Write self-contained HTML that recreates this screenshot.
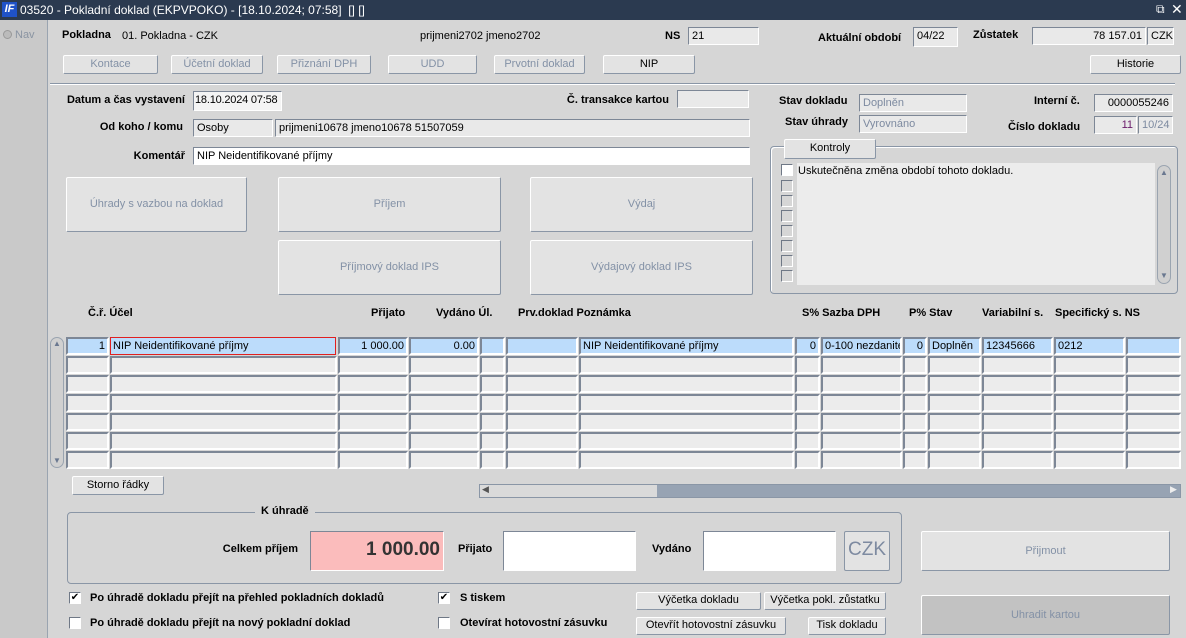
<!DOCTYPE html>
<html><head><meta charset="utf-8"><style>
*{box-sizing:border-box;margin:0;padding:0}
body{width:1186px;height:638px;overflow:hidden;background:#d6d6d6;font-family:"Liberation Sans",sans-serif;font-size:11px;color:#000;position:relative}
.a{position:absolute;white-space:nowrap}
.b{font-weight:bold}
.r{text-align:right}
.in{position:absolute;background:#e9e9e9;border:1px solid;border-color:#7d8796 #fff #fff #7d8796;padding:2px 3px;line-height:12px;overflow:hidden;white-space:nowrap}
.btn{position:absolute;background:#e3e3e3;border:1px solid;border-color:#fff #8a96a6 #8a96a6 #fff;border-radius:2px;text-align:center;color:#000;line-height:16px;white-space:nowrap}
.dis{color:#8391a6}
.c{position:absolute;height:18px;background:#ececec;border:2px solid;border-color:#7d8796 #fff #fff #7d8796;padding:1px 2px;line-height:13px;overflow:hidden;white-space:nowrap}
.sel{background:#bcdcfb}
.cb{position:absolute;width:12px;height:12px;background:#fff;border:1px solid;border-color:#6f7886 #fff #fff #6f7886}
</style></head><body>
<div class="a" style="left:0;top:0;width:1186px;height:20px;background:#2b3a50"></div>
<div class="a" style="left:2px;top:2px;width:15px;height:15px;background:#1f52c8;color:#fff;font-weight:bold;font-style:italic;font-size:11px;text-align:center;line-height:15px">IF</div>
<div class="a" style="left:20px;top:3px;color:#fff;font-size:12px">03520 - Pokladní doklad (EKPVPOKO) - [18.10.2024; 07:58]&nbsp; [] []</div>
<div class="a" style="left:1156px;top:2px;color:#fff;font-size:12px">⧉</div>
<div class="a" style="left:1171px;top:1px;color:#fff;font-size:14px">✕</div>
<div class="a" style="left:0;top:20px;width:48px;height:618px;background:#c9c9c9;border-right:1px solid #9aa4b0"></div>
<div class="a" style="left:3px;top:30px;width:9px;height:9px;border-radius:50%;background:#bbb;border:1px solid #999"></div>
<div class="a" style="left:15px;top:29px;color:#8a94a2">Nav</div>

<div class="a b" style="left:62px;top:29px">Pokladna</div>
<div class="a" style="left:122px;top:30px">01. Pokladna - CZK</div>
<div class="a" style="left:420px;top:30px">prijmeni2702 jmeno2702</div>
<div class="a b" style="left:665px;top:30px">NS</div>
<div class="in" style="left:688px;top:27px;width:71px;height:18px">21</div>
<div class="a b" style="left:818px;top:32px">Aktuální období</div>
<div class="in" style="left:913px;top:27px;width:45px;height:20px">04/22</div>
<div class="a b" style="left:973px;top:29px">Zůstatek</div>
<div class="in r" style="left:1032px;top:27px;width:114px;height:18px">78 157.01</div>
<div class="in" style="left:1147px;top:27px;width:27px;height:18px">CZK</div>

<div class="btn dis" style="left:63px;top:55px;width:95px;height:19px">Kontace</div>
<div class="btn dis" style="left:171px;top:55px;width:92px;height:19px">Účetní doklad</div>
<div class="btn dis" style="left:277px;top:55px;width:94px;height:19px">Přiznání DPH</div>
<div class="btn dis" style="left:388px;top:55px;width:89px;height:19px">UDD</div>
<div class="btn dis" style="left:494px;top:55px;width:91px;height:19px">Prvotní doklad</div>
<div class="btn" style="left:603px;top:55px;width:92px;height:19px">NIP</div>
<div class="btn" style="left:1090px;top:55px;width:91px;height:19px">Historie</div>
<div class="a" style="left:50px;top:83px;width:1125px;height:2px;border-top:1px solid #8a96a6;border-bottom:1px solid #fff"></div>

<div class="a b r" style="left:40px;top:94px;width:145px">Datum a čas vystavení</div>
<div class="in" style="left:193px;top:91px;width:89px;height:20px;background:#f4f4f4;padding:2px 1px;letter-spacing:-0.2px">18.10.2024 07:58</div>
<div class="a b r" style="left:520px;top:94px;width:149px">Č. transakce kartou</div>
<div class="in" style="left:677px;top:90px;width:72px;height:18px"></div>
<div class="a b" style="left:779px;top:95px">Stav dokladu</div>
<div class="in" style="left:859px;top:94px;width:108px;height:18px;color:#7d8aa0">Doplněn</div>
<div class="a b" style="left:785px;top:116px">Stav úhrady</div>
<div class="in" style="left:859px;top:115px;width:108px;height:18px;color:#7d8aa0">Vyrovnáno</div>
<div class="a b" style="left:1034px;top:95px">Interní č.</div>
<div class="in r" style="left:1094px;top:94px;width:79px;height:18px">0000055246</div>
<div class="a b" style="left:1008px;top:121px">Číslo dokladu</div>
<div class="in r" style="left:1094px;top:116px;width:43px;height:18px;color:#6a1a6a">11</div>
<div class="in" style="left:1138px;top:116px;width:35px;height:18px;color:#7d8aa0">10/24</div>

<div class="a b r" style="left:40px;top:121px;width:143px">Od koho / komu</div>
<div class="in" style="left:193px;top:119px;width:80px;height:18px">Osoby</div>
<div class="in" style="left:275px;top:119px;width:475px;height:18px">prijmeni10678 jmeno10678 51507059</div>
<div class="a b r" style="left:40px;top:150px;width:145px">Komentář</div>
<div class="in" style="left:193px;top:147px;width:557px;height:18px;background:#fff">NIP Neidentifikované příjmy</div>

<div class="a" style="left:770px;top:146px;width:408px;height:148px;border:1px solid #8a96a6;border-radius:4px;box-shadow:inset 1px 1px 0 #fff"></div>
<div class="btn" style="left:784px;top:139px;width:92px;height:20px">Kontroly</div>
<div class="a" style="left:797px;top:163px;width:358px;height:122px;background:#ececec"></div>
<div class="a" style="left:798px;top:165px">Uskutečněna změna období tohoto dokladu.</div>
<div class="cb" style="left:781px;top:164px"></div>
<div class="cb" style="left:781px;top:180px;background:#d6d6d6"></div>
<div class="cb" style="left:781px;top:195px;background:#d6d6d6"></div>
<div class="cb" style="left:781px;top:210px;background:#d6d6d6"></div>
<div class="cb" style="left:781px;top:225px;background:#d6d6d6"></div>
<div class="cb" style="left:781px;top:240px;background:#d6d6d6"></div>
<div class="cb" style="left:781px;top:255px;background:#d6d6d6"></div>
<div class="cb" style="left:781px;top:270px;background:#d6d6d6"></div>
<div class="a" style="left:1157px;top:165px;width:14px;height:119px;background:#d0d0d0;border:1px solid #9aa4b0;border-radius:7px"></div>
<div class="a" style="left:1160px;top:168px;font-size:8px;color:#6a7890">▲</div>
<div class="a" style="left:1160px;top:271px;font-size:8px;color:#6a7890">▼</div>

<div class="btn dis" style="left:66px;top:177px;width:181px;height:55px;line-height:53px">Úhrady s vazbou na doklad</div>
<div class="btn dis" style="left:278px;top:177px;width:223px;height:55px;line-height:53px">Příjem</div>
<div class="btn dis" style="left:530px;top:177px;width:223px;height:55px;line-height:53px">Výdaj</div>
<div class="btn dis" style="left:278px;top:240px;width:223px;height:55px;line-height:53px">Příjmový doklad IPS</div>
<div class="btn dis" style="left:530px;top:240px;width:223px;height:55px;line-height:53px">Výdajový doklad IPS</div>

<div class="a b" style="left:88px;top:307px">Č.ř. Účel</div>
<div class="a b" style="left:371px;top:307px">Přijato</div>
<div class="a b" style="left:436px;top:307px">Vydáno Úl.</div>
<div class="a b" style="left:518px;top:307px">Prv.doklad Poznámka</div>
<div class="a b" style="left:802px;top:307px">S% Sazba DPH</div>
<div class="a b" style="left:909px;top:307px">P% Stav</div>
<div class="a b" style="left:982px;top:307px">Variabilní s.</div>
<div class="a b" style="left:1055px;top:307px">Specifický s. NS</div>

<div class="a" style="left:50px;top:337px;width:14px;height:131px;background:#d0d0d0;border:1px solid #9aa4b0;border-radius:7px"></div>
<div class="a" style="left:53px;top:339px;font-size:8px;color:#6a7890">▲</div>
<div class="a" style="left:53px;top:456px;font-size:8px;color:#6a7890">▼</div>
<div id="g"></div>
<div class="c sel r" style="left:66px;top:337px;width:43px">1</div>
<div class="c sel" style="left:110px;top:337px;width:226px;border:1px solid #e02020;padding:2px 2px">NIP Neidentifikované příjmy</div>
<div class="c sel r" style="left:338px;top:337px;width:70px">1 000.00</div>
<div class="c sel r" style="left:409px;top:337px;width:70px">0.00</div>
<div class="c sel" style="left:480px;top:337px;width:25px"></div>
<div class="c sel" style="left:506px;top:337px;width:72px"></div>
<div class="c sel" style="left:579px;top:337px;width:215px">NIP Neidentifikované příjmy</div>
<div class="c sel r" style="left:795px;top:337px;width:25px">0</div>
<div class="c sel" style="left:821px;top:337px;width:81px">0-100 nezdanitelné</div>
<div class="c sel r" style="left:903px;top:337px;width:24px">0</div>
<div class="c sel" style="left:928px;top:337px;width:53px">Doplněn</div>
<div class="c sel" style="left:982px;top:337px;width:71px">12345666</div>
<div class="c sel" style="left:1054px;top:337px;width:71px">0212</div>
<div class="c sel" style="left:1126px;top:337px;width:55px"></div>
<script>
var cols=[[66,43],[110,227],[338,70],[409,70],[480,25],[506,72],[579,215],[795,25],[821,81],[903,24],[928,53],[982,71],[1054,71],[1126,55]],h='';
for(var r=1;r<7;r++)for(var i=0;i<cols.length;i++)h+='<div class="c" style="left:'+cols[i][0]+'px;top:'+(337+r*19)+'px;width:'+cols[i][1]+'px"></div>';
document.getElementById('g').innerHTML=h;
</script>

<div class="btn" style="left:72px;top:476px;width:92px;height:19px">Storno řádky</div>
<div class="a" style="left:479px;top:484px;width:702px;height:14px;background:#97a3b3;border:1px solid #8a96a6"></div>
<div class="a" style="left:480px;top:485px;width:177px;height:12px;background:#dadada"></div>
<div class="a" style="left:482px;top:484px;font-size:9px;color:#555">◀</div>
<div class="a" style="left:1170px;top:484px;font-size:9px;color:#eee">▶</div>

<div class="a" style="left:67px;top:512px;width:835px;height:72px;border:1px solid #8a96a6;border-radius:4px"></div>
<div class="a b" style="left:255px;top:505px;background:#d6d6d6;padding:0 6px">K úhradě</div>
<div class="a b r" style="left:180px;top:543px;width:118px">Celkem příjem</div>
<div class="in r" style="left:310px;top:531px;width:134px;height:40px;background:#fbbcbc;font-size:19px;font-weight:bold;line-height:32px;color:#333">1 000.00</div>
<div class="a b" style="left:458px;top:543px">Přijato</div>
<div class="in" style="left:503px;top:531px;width:133px;height:40px;background:#fff"></div>
<div class="a b" style="left:652px;top:543px">Vydáno</div>
<div class="in" style="left:703px;top:531px;width:133px;height:40px;background:#fff"></div>
<div class="btn" style="left:844px;top:531px;width:46px;height:40px;line-height:36px;font-size:19px;color:#7d8aa0;border-color:#8a96a6">CZK</div>
<div class="btn dis" style="left:921px;top:531px;width:249px;height:40px;line-height:38px">Přijmout</div>
<div class="btn dis" style="left:921px;top:595px;width:249px;height:40px;line-height:38px;background:#c2c2c2">Uhradit kartou</div>

<div class="cb" style="left:69px;top:592px;font-size:10px;line-height:10px;text-align:center">✔</div>
<div class="a b" style="left:90px;top:592px">Po úhradě dokladu přejít na přehled pokladních dokladů</div>
<div class="cb" style="left:69px;top:617px"></div>
<div class="a b" style="left:90px;top:617px">Po úhradě dokladu přejít na nový pokladní doklad</div>
<div class="cb" style="left:438px;top:592px;font-size:10px;line-height:10px;text-align:center">✔</div>
<div class="a b" style="left:460px;top:592px">S tiskem</div>
<div class="cb" style="left:438px;top:617px"></div>
<div class="a b" style="left:460px;top:617px">Otevírat hotovostní zásuvku</div>
<div class="btn" style="left:636px;top:592px;width:125px;height:18px;line-height:15px">Výčetka dokladu</div>
<div class="btn" style="left:764px;top:592px;width:122px;height:18px;line-height:15px">Výčetka pokl. zůstatku</div>
<div class="btn" style="left:636px;top:617px;width:150px;height:18px;line-height:15px">Otevřít hotovostní zásuvku</div>
<div class="btn" style="left:808px;top:617px;width:78px;height:18px;line-height:15px">Tisk dokladu</div>
</body></html>
